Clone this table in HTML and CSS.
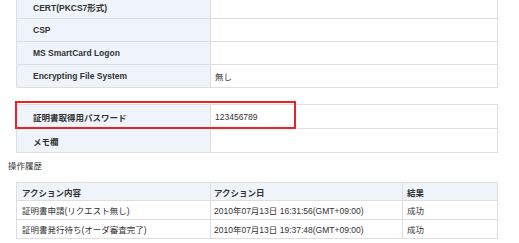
FILE: index.html
```
<!DOCTYPE html>
<html lang="ja">
<head>
<meta charset="utf-8">
<link rel="stylesheet" href="styles.css">
</head>
<body>
<div class="page">
  <table class="grid grid-top">
    <tr><td class="label">CERT(PKCS7形式)</td><td class="value"></td></tr>
    <tr><td class="label">CSP</td><td class="value"></td></tr>
    <tr><td class="label">MS SmartCard Logon</td><td class="value"></td></tr>
    <tr><td class="label">Encrypting File System</td><td class="value">無し</td></tr>
  </table>

  <div class="marked">
    <table class="grid grid-pass">
      <tr><td class="label">証明書取得用パスワード</td><td class="value">123456789</td></tr>
      <tr><td class="label">メモ欄</td><td class="value"></td></tr>
    </table>
    <div class="highlight"></div>
  </div>

  <div class="section-title">操作履歴</div>

  <table class="history">
    <tr class="head"><th class="c1">アクション内容</th><th class="c2">アクション日</th><th class="c3">結果</th></tr>
    <tr><td>証明書申請(リクエスト無し)</td><td>2010年07月13日 16:31:56(GMT+09:00)</td><td>成功</td></tr>
    <tr><td>証明書発行待ち(オーダ審査完了)</td><td>2010年07月13日 19:37:48(GMT+09:00)</td><td>成功</td></tr>
  </table>
</div>
</body>
</html>
```
FILE: styles.css
```
html, body {
  margin: 0;
  padding: 0;
  background: #ffffff;
}
body {
  font-family: "Liberation Sans", "Noto Sans CJK JP", sans-serif;
  font-size: 8.5px;
  color: #333333;
  overflow: hidden;
}
.page {
  padding-left: 16px;
}
table {
  border-collapse: collapse;
  width: 482px;
  table-layout: fixed;
}
td, th {
  border: 1px solid #dedede;
  padding: 0;
  vertical-align: middle;
  white-space: nowrap;
  overflow: hidden;
}
.grid-top {
  margin-top: -5px;
}
.grid-top td {
  height: 22px;
}
.grid td.label {
  width: 194px;
  background: #eef4f9;
  font-weight: bold;
  padding-left: 16px;
  box-sizing: border-box;
}
.grid td.value {
  padding-left: 4px;
}
.marked {
  position: relative;
  margin-top: 16px;
  width: 482px;
}
.grid-pass td {
  height: 23px;
}
.highlight {
  position: absolute;
  left: -1px;
  top: -3px;
  width: 281px;
  height: 28px;
  box-sizing: border-box;
  border: 2px solid #ee2222;
}
.section-title {
  margin-left: -8px;
  margin-top: 6px;
  line-height: 14px;
  height: 14px;
}
.history {
  margin-top: 9px;
}
.history th {
  height: 18px;
  background: #eef4f9;
  font-weight: bold;
  text-align: left;
}
.history td {
  height: 19px;
}
.history th, .history td {
  padding-left: 5px;
  box-sizing: border-box;
}
.history .c1 { width: 194px; }
.history .c2 { width: 192px; padding-left: 3px; }
.history td:nth-child(2) { padding-left: 3px; }
.history td:nth-child(3), .history .c3 { padding-left: 4px; }
```
